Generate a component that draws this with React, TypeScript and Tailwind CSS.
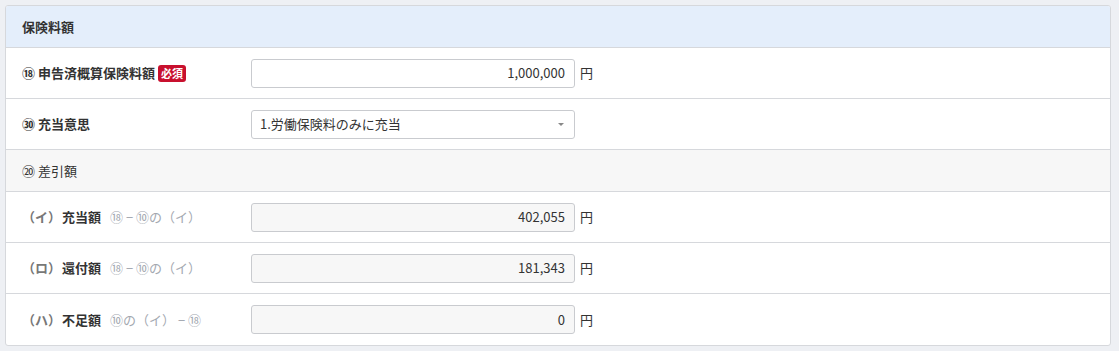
import React from 'react';

const font = { fontFamily: '"Noto Sans CJK JP", "Noto Sans", sans-serif' };

const Row: React.FC<{ label: React.ReactNode; children: React.ReactNode; last?: boolean }> = ({ label, children, last }) => (
  <div className={`flex items-center h-[51px] ${last ? '' : 'border-b border-[#d6d8dc]'}`}>
    <div className="w-[245px] pl-[16px] flex items-center text-[13px] text-[#333]">{label}</div>
    {children}
  </div>
);

const AmountInput: React.FC<{ value: string; disabled?: boolean }> = ({ value, disabled }) => (
  <div className="flex items-center">
    <div
      className={`w-[324px] h-[29px] border border-[#c9cbcf] rounded-[3px] flex items-center justify-end pr-[9px] text-[13px] text-[#333] ${
        disabled ? 'bg-[#f7f7f7]' : 'bg-white'
      }`}
    >
      {value}
    </div>
    <span className="ml-[5px] text-[13px] text-[#333]">円</span>
  </div>
);

const SubRow: React.FC<{ mark: string; name: string; formula: string; value: string; last?: boolean }> = ({
  mark,
  name,
  formula,
  value,
  last,
}) => (
  <Row
    last={last}
    label={
      <>
        <span className="text-[#777] font-bold">{mark}</span>
        <span className="font-bold ml-[1px]">{name}</span>
        <span className="ml-[9px] text-[#a3a8b0]">{formula}</span>
      </>
    }
  >
    <AmountInput value={value} disabled />
  </Row>
);

export default function App() {
  return (
    <div className="w-[1119px] h-[351px] bg-[#eef0f4] p-[5px] pr-[8px]" style={font}>
      <div className="bg-white border border-[#d6d8dc] rounded-[3px] overflow-hidden">
        {/* Header */}
        <div className="h-[42px] bg-[#e4eefb] border-b border-[#d6d8dc] flex items-center pl-[16px] text-[13px] font-bold text-[#333]">
          保険料額
        </div>

        <Row
          label={
            <>
              <span className="font-bold">⑱ 申告済概算保険料額</span>
              <span className="ml-[3px] bg-[#c8102e] text-white text-[11px] font-bold rounded-[3px] px-[3px] leading-[17px]">
                必須
              </span>
            </>
          }
        >
          <AmountInput value="1,000,000" />
        </Row>

        <Row label={<span className="font-bold">㉚ 充当意思</span>}>
          <div className="w-[324px] h-[29px] border border-[#c9cbcf] rounded-[3px] bg-white flex items-center justify-between pl-[8px] pr-[10px] text-[13px] text-[#333]">
            <span>1.労働保険料のみに充当</span>
            <span className="w-0 h-0 border-l-[3px] border-r-[3px] border-t-[3px] border-l-transparent border-r-transparent border-t-[#888]" />
          </div>
        </Row>

        {/* Sub header */}
        <div className="h-[42px] bg-[#f7f7f7] border-b border-[#d6d8dc] flex items-center pl-[16px] text-[13px] text-[#333]">
          ⑳ 差引額
        </div>

        <SubRow mark="（イ）" name="充当額" formula="⑱ − ⑩の（イ）" value="402,055" />
        <SubRow mark="（ロ）" name="還付額" formula="⑱ − ⑩の（イ）" value="181,343" />
        <SubRow mark="（ハ）" name="不足額" formula="⑩の（イ） − ⑱" value="0" last />
      </div>
    </div>
  );
}
